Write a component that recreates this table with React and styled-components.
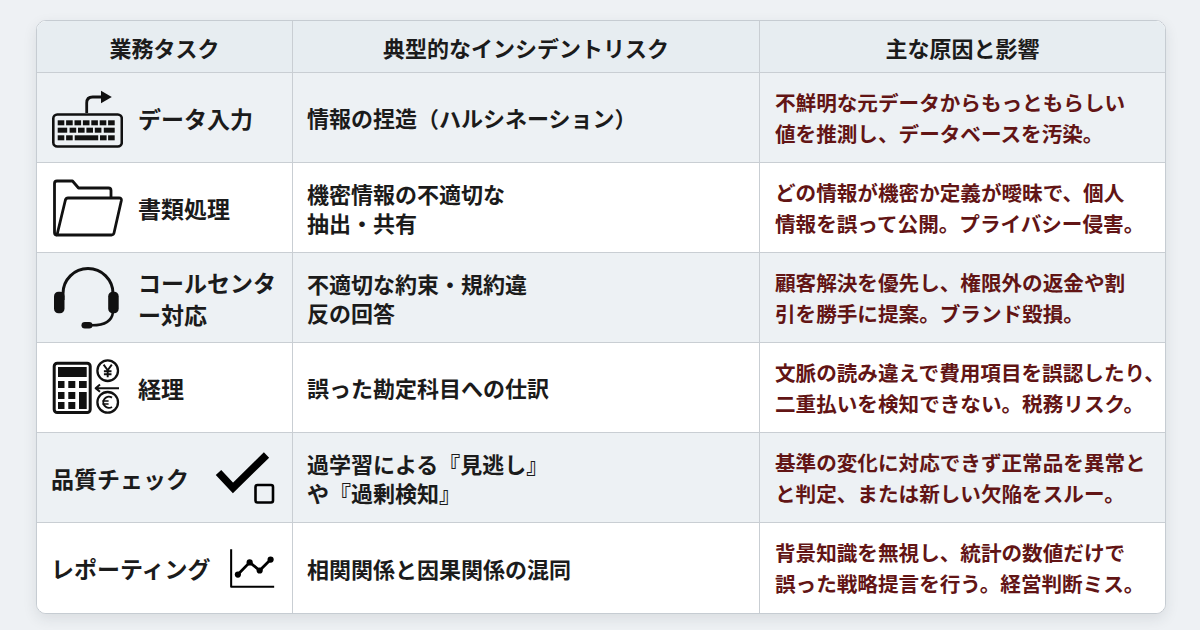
import React from "react";
import styled, { createGlobalStyle } from "styled-components";

const Global = createGlobalStyle`
  html, body { margin: 0; padding: 0; }
  body {
    background: #eef1f4;
    font-family: "Noto Sans CJK JP", "Noto Sans", sans-serif;
    width: 1200px;
    height: 630px;
    overflow: hidden;
  }
`;

const Page = styled.div`
  padding: 20px 34px 0 36px;
`;

const Table = styled.div`
  width: 1130px;
  height: 594px;
  box-sizing: border-box;
  display: grid;
  grid-template-rows: 52px repeat(6, 1fr);
  border: 1px solid #c6ccd2;
  border-radius: 10px;
  overflow: hidden;
  background: #ffffff;
  box-shadow: 0 5px 14px rgba(40, 50, 60, 0.10);
`;

const Grid = styled.div`
  display: grid;
  grid-template-columns: 255px 467px 1fr;
  background: ${(p) => (p.$shade ? "#edf1f4" : "#ffffff")};
  border-bottom: ${(p) => (p.$last ? "none" : "1.5px solid #c9ced3")};
  box-sizing: border-box;
  min-height: 0;
`;

const HeadCell = styled.div`
  display: flex;
  align-items: center;
  justify-content: center;
  font-size: 22px;
  font-weight: 700;
  color: #1b1b1b;
  background: #e7edf1;
  border-left: ${(p) => (p.$first ? "none" : "1.5px solid #c9ced3")};
`;

const TaskCell = styled.div`
  display: flex;
  align-items: center;
  justify-content: ${(p) => (p.$iconAfter ? "space-between" : "flex-start")};
  gap: 15px;
  padding: 0 14px;
`;

const IconBox = styled.div`
  width: 72px;
  height: 64px;
  flex: none;
  display: flex;
  align-items: center;
  justify-content: center;
  color: #111;
`;

const TaskText = styled.div`
  font-size: 23px;
  font-weight: 700;
  line-height: 32px;
  color: #1b1b1b;
  white-space: nowrap;
`;

const RiskCell = styled.div`
  display: flex;
  align-items: center;
  padding: 0 14px;
  border-left: 1.5px solid #c9ced3;
  font-size: 22px;
  font-weight: 700;
  line-height: 29px;
  color: #1b1b1b;
  white-space: nowrap;
`;

const CauseCell = styled.div`
  display: flex;
  align-items: center;
  padding: 0 0 0 15px;
  border-left: 1.5px solid #c9ced3;
  font-size: 20.6px;
  font-weight: 700;
  line-height: 31px;
  color: #621515;
  white-space: nowrap;
`;

const S = { fill: "none", stroke: "currentColor", strokeLinejoin: "round" };

const KeyboardIcon = () => {
  const r1 = [0, 1, 2, 3, 4, 5, 6].map((i) => 56.7 + i * 8.4);
  return (
    <svg width="72" height="64" viewBox="50 85 72 64">
      <rect x="52.3" y="113.5" width="68.5" height="32" rx="4" {...S} strokeWidth="2.6" />
      {r1.map((x) => (
        <rect key={x} x={x} y="119.3" width="6.6" height="5" fill="currentColor" />
      ))}
      <rect x="56.7" y="126.7" width="9.5" height="5" fill="currentColor" />
      {[68.6, 77, 85.4, 93.8].map((x) => (
        <rect key={x} x={x} y="126.7" width="6.6" height="5" fill="currentColor" />
      ))}
      <rect x="102.8" y="126.7" width="10.9" height="5" fill="currentColor" />
      <rect x="56.7" y="134.3" width="6.6" height="5" fill="currentColor" />
      <rect x="65.1" y="134.3" width="6.6" height="5" fill="currentColor" />
      <rect x="73.7" y="134.3" width="23.5" height="5" fill="currentColor" />
      <rect x="99" y="134.3" width="6.6" height="5" fill="currentColor" />
      <rect x="107.1" y="134.3" width="6.6" height="5" fill="currentColor" />
      <path d="M85.7 112 V102 Q85.7 96 91.7 96 H101" {...S} strokeWidth="2.8" />
      <path d="M100 89.8 L110.8 96 L100 102.2 Z" fill="currentColor" />
    </svg>
  );
};

const FolderIcon = () => (
  <svg width="72" height="64" viewBox="50 176 72 64">
    <path
      d="M56 235 Q53.5 235 53.5 232.5 V183.5 Q53.5 181 56 181 H71.5 L77.5 188 H107.5 Q110 188 110 190.5 V197"
      {...S}
      strokeWidth="2.8"
    />
    <path
      d="M56 235 H110.5 Q112.5 235 113 233 L120.3 200.8 Q120.8 198 118 198 H67 Q65 198 64.4 200 Z"
      {...S}
      strokeWidth="2.8"
    />
  </svg>
);

const HeadsetIcon = () => (
  <svg width="72" height="64" viewBox="50 266 72 64">
    <path d="M62 300 V293.5 A25 25 0 0 1 112 293.5 V300" {...S} strokeWidth="3" />
    <rect x="53" y="291.7" width="10.5" height="21.5" rx="4.5" fill="currentColor" />
    <rect x="107.2" y="291.7" width="10.5" height="21.5" rx="4.5" fill="currentColor" />
    <path d="M112 312 Q110.5 325.3 91 325.3" {...S} strokeWidth="2.5" />
    <rect x="80.5" y="322" width="11" height="6.6" rx="3.3" fill="currentColor" />
  </svg>
);

const CalcIcon = () => (
  <svg width="72" height="64" viewBox="50 357 72 64">
    <rect x="53.2" y="364.2" width="36" height="49.3" rx="3" {...S} strokeWidth="3" />
    <rect x="57" y="368" width="28.7" height="10" fill="currentColor" />
    {[382, 393, 403].map((y) => (
      <React.Fragment key={y}>
        <rect x="57" y={y} width="6.5" height="7" fill="currentColor" />
        <rect x="67.3" y={y} width="7" height="7" fill="currentColor" />
      </React.Fragment>
    ))}
    <rect x="78" y="382" width="7.7" height="7" fill="currentColor" />
    <rect x="78" y="393" width="7.7" height="17" fill="currentColor" />
    <circle cx="106.7" cy="371.7" r="10.3" {...S} strokeWidth="2.3" />
    <path
      d="M102.6 365.6 L106.7 371.3 L110.8 365.6 M106.7 371.3 V378.2 M102.9 372.3 H110.5 M102.9 375.3 H110.5"
      {...S}
      strokeWidth="1.9"
    />
    <circle cx="106.7" cy="403.3" r="10.3" {...S} strokeWidth="2.3" />
    <path d="M111 398.6 A5.6 5.6 0 1 0 111 408" {...S} strokeWidth="1.9" />
    <path d="M101.4 402 H107.6 M101.4 405 H107.6" {...S} strokeWidth="1.7" />
    <path d="M118 389.2 H95 M99 385.6 L94.6 389.2 L99 392.8" {...S} strokeWidth="2" />
  </svg>
);

const CheckIcon = () => (
  <svg width="64" height="60" viewBox="214 450 64 60">
    <path d="M218.5 474.5 L233 490 L266.5 457" fill="none" stroke="currentColor" strokeWidth="7.5" />
    <rect x="255.5" y="487" width="17.5" height="17.5" rx="2" {...S} strokeWidth="2.6" />
  </svg>
);

const ChartIcon = () => (
  <svg width="56" height="48" viewBox="224 545 56 48">
    <path d="M229.5 549 V589 H275.5" {...S} strokeWidth="2.2" />
    <polyline points="236.7,576 249.3,563 260,571.7 271.7,560" {...S} strokeWidth="3" />
    {[
      [236.7, 576],
      [249.3, 563],
      [260, 571.7],
      [271.7, 560],
    ].map(([x, y]) => (
      <circle key={x} cx={x} cy={y} r="3.3" fill="currentColor" />
    ))}
  </svg>
);

const Lines = ({ lines }) =>
  lines.map((l, i) => (
    <React.Fragment key={i}>
      {i > 0 && <br />}
      {l}
    </React.Fragment>
  ));

const rows = [
  {
    icon: <KeyboardIcon />,
    task: ["データ入力"],
    risk: ["情報の捏造（ハルシネーション）"],
    cause: ["不鮮明な元データからもっともらしい", "値を推測し、データベースを汚染。"],
  },
  {
    icon: <FolderIcon />,
    task: ["書類処理"],
    risk: ["機密情報の不適切な", "抽出・共有"],
    cause: ["どの情報が機密か定義が曖昧で、個人", "情報を誤って公開。プライバシー侵害。"],
  },
  {
    icon: <HeadsetIcon />,
    task: ["コールセンタ", "ー対応"],
    risk: ["不適切な約束・規約違", "反の回答"],
    cause: ["顧客解決を優先し、権限外の返金や割", "引を勝手に提案。ブランド毀損。"],
  },
  {
    icon: <CalcIcon />,
    task: ["経理"],
    risk: ["誤った勘定科目への仕訳"],
    cause: ["文脈の読み違えで費用項目を誤認したり、", "二重払いを検知できない。税務リスク。"],
  },
  {
    icon: <CheckIcon />,
    after: true,
    task: ["品質チェック"],
    risk: ["過学習による『見逃し』", "や『過剰検知』"],
    cause: ["基準の変化に対応できず正常品を異常と", "と判定、または新しい欠陥をスルー。"],
  },
  {
    icon: <ChartIcon />,
    after: true,
    task: ["レポーティング"],
    risk: ["相関関係と因果関係の混同"],
    cause: ["背景知識を無視し、統計の数値だけで", "誤った戦略提言を行う。経営判断ミス。"],
  },
];

export default function App() {
  return (
    <>
      <Global />
      <Page>
        <Table>
          <Grid>
            <HeadCell $first>業務タスク</HeadCell>
            <HeadCell>典型的なインシデントリスク</HeadCell>
            <HeadCell>主な原因と影響</HeadCell>
          </Grid>
          {rows.map((r, i) => (
            <Grid key={i} $shade={i % 2 === 0} $last={i === rows.length - 1}>
              <TaskCell $iconAfter={r.after}>
                {!r.after && <IconBox>{r.icon}</IconBox>}
                <TaskText>
                  <Lines lines={r.task} />
                </TaskText>
                {r.after && r.icon}
              </TaskCell>
              <RiskCell>
                <div>
                  <Lines lines={r.risk} />
                </div>
              </RiskCell>
              <CauseCell>
                <div>
                  <Lines lines={r.cause} />
                </div>
              </CauseCell>
            </Grid>
          ))}
        </Table>
      </Page>
    </>
  );
}
